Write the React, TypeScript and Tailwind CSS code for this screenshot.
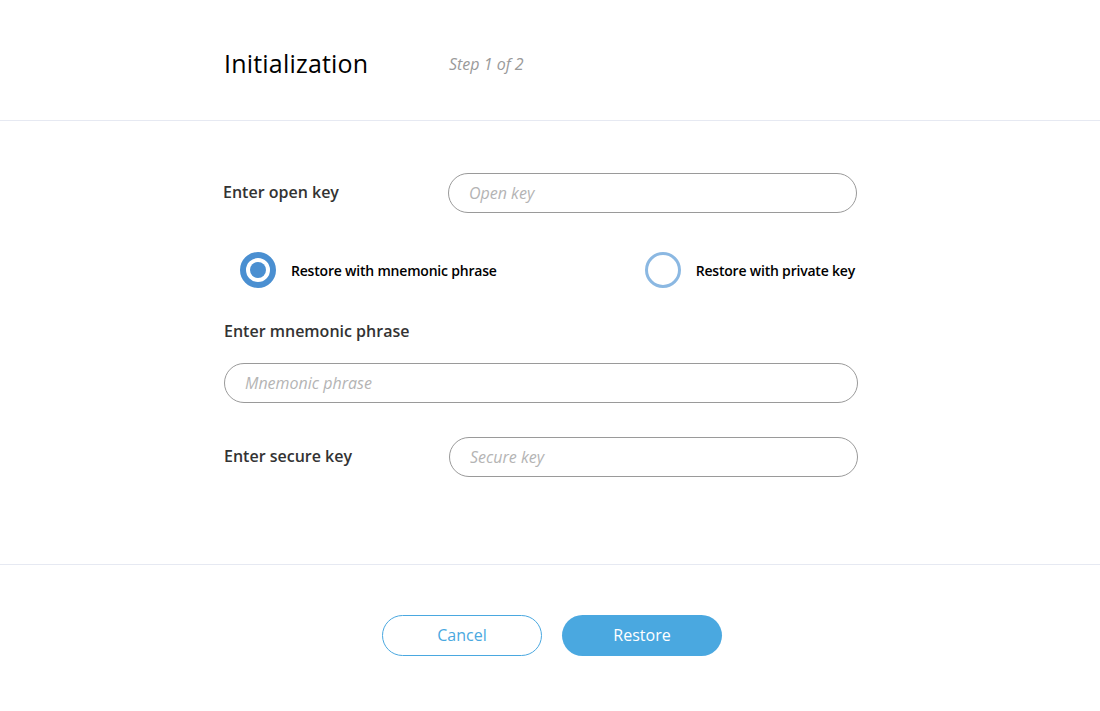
import { useState } from "react";

const font = { fontFamily: '"Open Sans", "Noto Sans", sans-serif' };

function TextField({ placeholder, className = "" }: { placeholder: string; className?: string }) {
  return (
    <input
      placeholder={placeholder}
      className={`h-10 rounded-full border border-[#9a9a9a] bg-white px-5 text-[16px] text-[#333] outline-none placeholder:italic placeholder:text-[#b4b4b4] ${className}`}
    />
  );
}

function Radio({ checked, label, onClick }: { checked: boolean; label: string; onClick: () => void }) {
  return (
    <button type="button" onClick={onClick} className="flex items-center gap-[15px]">
      {checked ? (
        <span className="flex h-9 w-9 items-center justify-center rounded-full border-[6px] border-[#4a8fd1]">
          <span className="h-4 w-4 rounded-full bg-[#4a8fd1]" />
        </span>
      ) : (
        <span className="h-9 w-9 rounded-full border-[3px] border-[#8bb8e2]" />
      )}
      <span className="text-[14px] font-semibold tracking-[-0.2px] text-black">{label}</span>
    </button>
  );
}

export default function App() {
  const [mode, setMode] = useState<"mnemonic" | "private">("mnemonic");

  return (
    <div className="min-h-screen bg-white" style={font}>
      {/* Header */}
      <header className="flex h-[121px] items-center border-b border-[#e6e9f2] pt-2">
        <div className="ml-[224px] flex items-center">
          <h1 className="w-[225px] text-[25px] font-medium tracking-[0.2px] text-black">Initialization</h1>
          <span className="text-[16px] italic text-[#9a9a9a]">Step 1 of 2</span>
        </div>
      </header>

      {/* Form */}
      <section className="h-[444px] border-b border-[#e6e9f2] pt-[52px]">
        <div className="ml-[224px] flex w-[634px] flex-col">
          <div className="flex items-center">
            <label className="-ml-px w-[225px] pb-0.5 text-[16px] font-semibold text-[#333]">Enter open key</label>
            <TextField placeholder="Open key" className="w-[409px]" />
          </div>

          <div className="mt-[39px] flex items-center justify-between pl-4 pr-[3px]">
            <Radio checked={mode === "mnemonic"} label="Restore with mnemonic phrase" onClick={() => setMode("mnemonic")} />
            <Radio checked={mode === "private"} label="Restore with private key" onClick={() => setMode("private")} />
          </div>

          <label className="mt-[31px] text-[16px] font-semibold leading-6 text-[#333]">Enter mnemonic phrase</label>
          <TextField placeholder="Mnemonic phrase" className="mt-5 w-full" />

          <div className="mt-[34px] flex items-center">
            <label className="w-[225px] pb-0.5 text-[16px] font-semibold text-[#333]">Enter secure key</label>
            <TextField placeholder="Secure key" className="w-[409px]" />
          </div>
        </div>
      </section>

      {/* Footer */}
      <footer className="flex justify-center gap-5 pl-1 pt-[50px]">
        <button className="h-[41px] w-40 rounded-full border border-[#4aa8e0] pb-0.5 text-[16px] text-[#4aa8e0]">Cancel</button>
        <button className="h-[41px] w-40 rounded-full bg-[#4aa8e0] pb-0.5 text-[16px] text-white">Restore</button>
      </footer>
    </div>
  );
}
